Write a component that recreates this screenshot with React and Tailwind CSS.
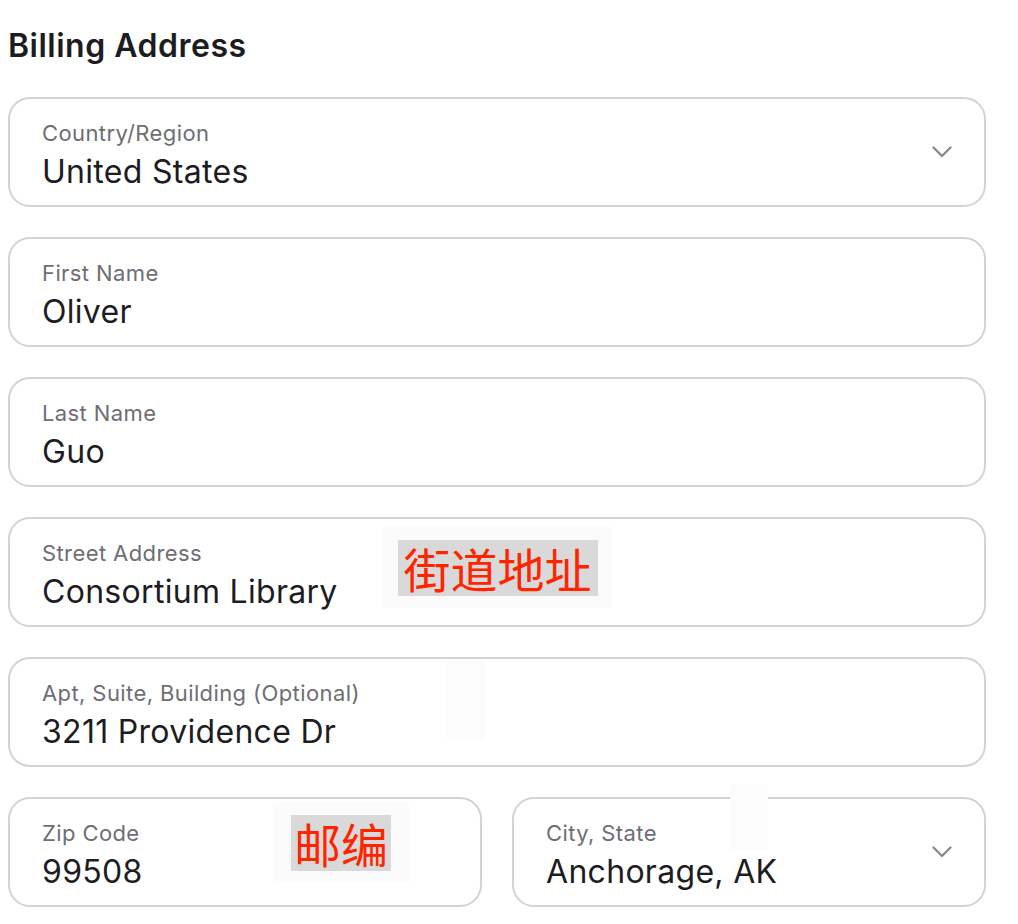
import React from "react";

const Chevron = () => (
  <svg width="20" height="12" viewBox="0 0 20 12" fill="none" className="shrink-0">
    <path d="M1.5 1.5 L10 10 L18.5 1.5" stroke="#86868b" strokeWidth="2.2" strokeLinecap="round" strokeLinejoin="round" />
  </svg>
);

function Field({ label, value, select, className = "" }) {
  return (
    <div
      className={
        "relative h-[110px] rounded-[22px] border-2 border-[#d2d2d7] bg-white pl-[32px] pr-[34px] pt-[21px] flex items-start " +
        className
      }
    >
      <div className="flex-1">
        <div className="text-[22px] leading-[26px] tracking-[0.4px] text-[#6e6e73]">{label}</div>
        <div className="mt-[7px] text-[32px] leading-[38px] tracking-[0.3px] text-[#1d1d1f]">{value}</div>
      </div>
      {select && (
        <div className="self-center -mt-[21px] mr-[-2px]">
          <Chevron />
        </div>
      )}
    </div>
  );
}

export default function App() {
  return (
    <div
      className="relative w-[1018px] h-[924px] bg-white pl-[8px] pt-[27px] overflow-hidden"
      style={{ fontFamily: "Inter, 'Noto Sans', sans-serif" }}
    >
      <h1 className="text-[32px] leading-[38px] font-semibold text-[#1d1d1f] tracking-[0.5px]">Billing Address</h1>
      <div className="mt-[32px] w-[978px] flex flex-col gap-[30px]">
        <Field label="Country/Region" value="United States" select />
        <Field label="First Name" value="Oliver" />
        <Field label="Last Name" value="Guo" />
        <Field label="Street Address" value="Consortium Library" />
        <Field label="Apt, Suite, Building (Optional)" value="3211 Providence Dr" />
        <div className="grid grid-cols-2 gap-[30px]">
          <Field label="Zip Code" value="99508" />
          <Field label="City, State" value="Anchorage, AK" select />
        </div>
      </div>

      {/* annotation overlays */}
      <div className="absolute left-[383px] top-[527px] w-[229px] h-[81px] bg-[#fbfbfb] flex items-center justify-center">
        <div
          className="w-[200px] h-[56px] bg-[#d9d9d9] flex items-center justify-center text-[47px] leading-[56px] text-[#ff2400]"
          style={{ fontFamily: "'Noto Sans CJK SC', sans-serif" }}
        >
          街道地址
        </div>
      </div>
      <div className="absolute left-[447px] top-[660px] w-[38px] h-[80px] bg-[#fcfcfc]" />
      <div className="absolute left-[273px] top-[803px] w-[136px] h-[80px] bg-[#fbfbfb] flex items-center justify-center">
        <div
          className="w-[100px] h-[56px] bg-[#d9d9d9] flex items-center justify-center text-[47px] leading-[56px] text-[#ff2400]"
          style={{ fontFamily: "'Noto Sans CJK SC', sans-serif" }}
        >
          邮编
        </div>
      </div>
      <div className="absolute left-[730px] top-[785px] w-[38px] h-[65px] bg-[#fcfcfc]" />
    </div>
  );
}
